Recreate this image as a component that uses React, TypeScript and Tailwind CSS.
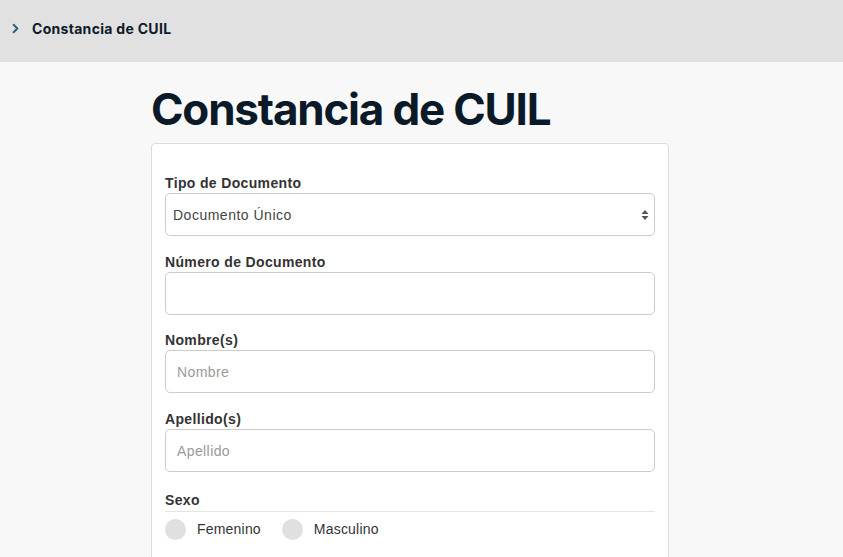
import { ChevronRight } from 'lucide-react'

const fields = [
  { label: 'Número de Documento', placeholder: '', mt: 'mt-[16px]' },
  { label: 'Nombre(s)', placeholder: 'Nombre', mt: 'mt-[15px]' },
  { label: 'Apellido(s)', placeholder: 'Apellido', mt: 'mt-[16px]' },
]

export default function App() {
  return (
    <div className="min-h-[557px] bg-[#f8f8f8] font-['Liberation_Sans',Arial,sans-serif] text-[#333]">
      {/* Breadcrumb bar */}
      <div className="flex h-[62px] items-center bg-[#e1e1e1] pb-[6px] pl-[8px]">
        <ChevronRight className="size-[15px] text-[#2f5d7c]" strokeWidth={3} />
        <span className="ml-[9px] font-['Inter',sans-serif] text-[14px] font-bold tracking-[0.3px] text-[#0d1b2a]">Constancia de CUIL</span>
      </div>

      <div className="ml-[151px] w-[518px] pt-[22px]">
        <h1 className="font-['Inter',sans-serif] text-[44px] font-bold leading-[50px] tracking-[-1.2px] text-[#0b1a29]">
          Constancia de CUIL
        </h1>

        <div className="mt-[9px] rounded-[4px] border border-[#dcdcdc] bg-white px-[13px] pt-[29px] pb-[20px] tracking-[0.35px]">
          <label className="block text-[14px] font-bold leading-[20px] text-[#333]">Tipo de Documento</label>
          <div className="relative">
            <select className="h-[43px] w-full appearance-none rounded-[5px] border border-[#ccc] bg-white px-[7px] pt-[2px] text-[14px] tracking-[0.5px] text-[#444] outline-none">
              <option>Documento Único</option>
            </select>
            <svg className="pointer-events-none absolute right-[6px] top-1/2 -translate-y-1/2" width="8" height="12" viewBox="0 0 8 12">
              <path d="M4 1 L7.5 5 H0.5 Z" fill="#555" />
              <path d="M4 11 L7.5 7 H0.5 Z" fill="#555" />
            </svg>
          </div>

          {fields.map(f => (
            <div key={f.label} className={f.mt}>
              <label className="block text-[14px] font-bold leading-[20px] text-[#333]">{f.label}</label>
              <input
                placeholder={f.placeholder}
                className="h-[43px] w-full rounded-[5px] border border-[#ccc] bg-white px-[11px] text-[14px] tracking-[0.4px] outline-none placeholder:text-[#999]"
              />
            </div>
          ))}

          <div className="mt-[18px]">
            <p className="border-b border-[#e5e5e5] pb-[1px] text-[14px] font-bold leading-[20px]">Sexo</p>
            <div className="mt-[7px] flex items-center">
              {['Femenino', 'Masculino'].map(s => (
                <label key={s} className="mr-[21px] flex items-center">
                  <span className="size-[21px] rounded-full bg-[#e0e0e0]" />
                  <span className="ml-[11px] text-[14px] tracking-[0.2px] text-[#333]">{s}</span>
                </label>
              ))}
            </div>
          </div>
        </div>
      </div>
    </div>
  )
}
